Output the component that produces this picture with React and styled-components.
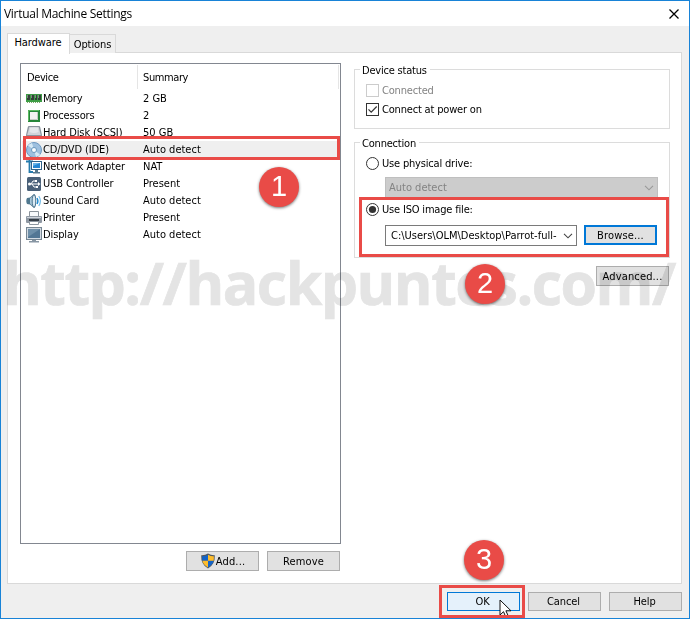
import React from "react";
import styled, { createGlobalStyle, css } from "styled-components";

const Global = createGlobalStyle`
  * { box-sizing: border-box; }
  body { margin: 0; background: #fff; }
`;

const RED = "#e94b47";

const Window = styled.div`
  position: relative;
  width: 690px;
  height: 619px;
  border: 1px solid #1883d7;
  background: #efefef;
  color: #000;
  font: 11px/17px "DejaVu Sans Condensed", "DejaVu Sans", sans-serif;
  font-stretch: condensed;
  white-space: nowrap;
  overflow: hidden;
  display: flex;
  flex-direction: column;
  isolation: isolate;
`;
const TitleBar = styled.header`
  height: 25px;
  flex: none;
  background: #fff;
  display: flex;
  align-items: center;
  justify-content: space-between;
  padding: 0 9px 0 3px;
  font: 12px/24px "Open Sans", "Noto Sans", sans-serif;
  letter-spacing: -0.29px;
`;
const Tabs = styled.nav`
  height: 27px;
  flex: none;
  display: flex;
  align-items: flex-end;
  padding-left: 6px;
`;
const Tab = styled.div`
  border: 1px solid #d9d9d9;
  border-bottom: 0;
  text-align: center;
  height: ${(p) => (p.$active ? 21 : 19)}px;
  width: ${(p) => (p.$active ? 63 : 47)}px;
  line-height: ${(p) => (p.$active ? 18 : 19)}px;
  padding-right: ${(p) => (p.$active ? 1 : 0)}px;
  letter-spacing: -0.1px;
  background: ${(p) => (p.$active ? "#fff" : "#efefef")};
  margin-bottom: ${(p) => (p.$active ? -1 : 0)}px;
  margin-left: ${(p) => (p.$active ? 0 : -1)}px;
  z-index: ${(p) => (p.$active ? 1 : 0)};
`;
const Panel = styled.main`
  width: 675px;
  height: 532px;
  flex: none;
  margin: -1px 0 0 6px;
  border: 1px solid #d9d9d9;
  background: #fff;
  display: flex;
  padding: 11px 10px 0 12px;
  gap: 13px;
`;
const Left = styled.section`
  width: 321px;
`;
const List = styled.div`
  height: 481px;
  margin-top: -1px;
  border: 1px solid #828790;
  padding: 1px;
`;
const ListHead = styled.div`
  display: flex;
  height: 24px;
  margin-bottom: 1px;
  line-height: 25px;
  letter-spacing: -0.4px;
`;
const HeadCell = styled.div`
  width: ${(p) => p.$w}px;
  padding-left: 5px;
  border-right: 1px solid #e5e5e5;
`;
const Row = styled.div`
  display: flex;
  align-items: center;
  height: 17px;
  padding-left: 4px;
  background: ${(p) => (p.$selected ? "#efefef" : "transparent")};
`;
const DeviceName = styled.span`
  width: 101px;
  padding-left: 1px;
  letter-spacing: -0.12px;
`;
const Icon = styled.svg`
  width: 16px;
  height: 16px;
  flex: none;
`;
const ButtonBar = styled.div`
  display: flex;
  justify-content: flex-end;
  gap: 8px;
  margin: 7px 1px 0 0;
`;
const Button = styled.button`
  width: 73px;
  height: 20px;
  padding: 0;
  font: inherit;
  color: inherit;
  letter-spacing: 0.15px;
  display: flex;
  align-items: center;
  justify-content: center;
  border: 1px solid #adadad;
  background: #e1e1e1;
  ${(p) => p.$focus && css`border: 2px solid #0078d7;`}
  ${(p) => p.$hot && css`border-color: #0078d7; background: #e5f1fb;`}
`;
const Right = styled.section`
  width: 316px;
  padding-top: 5px;
  display: flex;
  flex-direction: column;
`;
const Group = styled.fieldset`
  margin: 0 0 ${(p) => p.$gap}px;
  height: ${(p) => p.$h}px;
  border: 1px solid #dcdcdc;
  padding: 0 11px;
`;
const GroupTitle = styled.div`
  width: max-content;
  height: 14px;
  line-height: 16px;
  margin: -7px 0 0 -6px;
  padding: 0 3px 0 2px;
  background: #fff;
  letter-spacing: -0.2px;
`;
const Option = styled.label`
  display: flex;
  align-items: center;
  gap: 3px;
  height: 19px;
  margin-top: ${(p) => p.$top || 0}px;
  color: ${(p) => (p.$disabled ? "#838383" : "#000")};
  letter-spacing: -0.18px;
`;
const Mark = styled.svg`
  width: 13px;
  height: 13px;
  flex: none;
`;
const Combo = styled.div`
  display: flex;
  align-items: center;
  justify-content: space-between;
  width: ${(p) => p.$w}px;
  height: 21px;
  margin-left: ${(p) => p.$indent || 0}px;
  margin-top: ${(p) => p.$top || 0}px;
  padding: 0 3px 0 ${(p) => (p.$disabled ? 3 : 5)}px;
  border: 1px solid ${(p) => (p.$disabled ? "#bfbfbf" : "#7a7a7a")};
  background: ${(p) => (p.$disabled ? "#ccc" : "#fff")};
  color: ${(p) => (p.$disabled ? "#838383" : "#000")};
`;
const FileRow = styled.div`
  display: flex;
  gap: 7px;
  margin: 6px 0 0 19px;
`;
const AlignEnd = styled.div`
  display: flex;
  justify-content: flex-end;
  padding-right: 1px;
`;
const Footer = styled.footer`
  display: flex;
  justify-content: flex-end;
  gap: 8px;
  padding: 8px 7px 0 0;

  ${Button} {
    height: 19px;
    letter-spacing: -0.1px;
    padding-right: 2px;
  }
`;
const Frame = styled.div`
  position: absolute;
  left: ${(p) => p.$x - 1}px;
  top: ${(p) => p.$y - 1}px;
  width: ${(p) => p.$w}px;
  height: ${(p) => p.$h}px;
  border: 3px solid ${RED};
`;
const Step = styled.div`
  position: absolute;
  left: ${(p) => p.$x - 21}px;
  top: ${(p) => p.$y - 21}px;
  width: 40px;
  height: 40px;
  border-radius: 50%;
  background: ${RED};
  color: #fff;
  text-align: center;
  font: 29px/39px "Liberation Sans", Arial, sans-serif;
  box-shadow: 0 1px 3px rgba(0, 0, 0, 0.55);
`;
const Watermark = styled.div`
  position: absolute;
  left: 2px;
  top: 241px;
  font: 800 59px/80px "Open Sans", "Noto Sans", sans-serif;
  font-weight: 700;
  letter-spacing: -1.5px;
  color: #e4e4e4;
  -webkit-text-stroke: 0.7px #e4e4e4;
  mix-blend-mode: multiply;
  pointer-events: none;
`;
const Pointer = styled.svg`
  position: absolute;
  left: 498px;
  top: 598px;
  width: 13px;
  height: 20px;
`;

const icons = {
  memory: (
    <>
      <path d="M0 3h16v8H0z" fill="#3d9c45" />
      <path d="M1 4h3v5H1zM5 4h3v5H5zM9 4h2v5H9zM12 4h3v5h-3z" fill="#344039" />
      <path d="M1 4h1v3H1zM5 4h1v3H5zM9 4h1v3H9zM12 4h1v3h-1z" fill="#7d8b80" />
      <path d="M1 11.500h14" stroke="#78a86a" strokeDasharray="1 1" />
    </>
  ),
  cpu: (
    <>
      <rect x="2" y="2" width="12" height="12" fill="#26863a" />
      <path d="M2.500 13V2.500H13" fill="none" stroke="#5dbb63" />
      <rect x="4" y="4" width="8" height="8" fill="#f1f2f0" />
      <path d="M4 11.500h7.500V4" fill="none" stroke="#c4ccc4" />
    </>
  ),
  disk: (
    <>
      <path d="M3 1h10q1 0 1.200 1L16 10v4H0v-4L1.800 2Q2 1 3 1z" fill="#8c959f" />
      <path d="M3.300 2h9.400L14.800 10H1.200z" fill="#d0d4da" />
      <path d="M4 3q4-1 8 0l.6 4q-4.600 2-9.200 0z" fill="#e4e7eb" />
      <path d="M1 11h14v2H1z" fill="#555d66" />
      <path d="M12 11.500h2" stroke="#75dc62" />
    </>
  ),
  disc: (
    <>
      <circle cx="8" cy="8" r="7.500" fill="#9dc0df" stroke="#6d98c0" />
      <path d="M8 8L2 3.500A7 7 0 0 1 6 1zM8 8l6 4.500a7 7 0 0 1-4 2.500z" fill="#d5e9f5" />
      <circle cx="8" cy="8" r="2.600" fill="#e7f2f9" stroke="#719dc1" />
      <circle cx="8" cy="8" r="1" fill="#fff" />
    </>
  ),
  network: (
    <>
      <path d="M0 2.500h7M3.500 1v12H7" fill="none" stroke="#257bad" strokeWidth="1.800" />
      <rect x="5.500" y="2.500" width="10" height="8" fill="#fff" stroke="#31648b" />
      <path d="M7 4h7v5H7z" fill="#2686d2" />
      <path d="M7 4h7L7 7z" fill="#6ab5e9" />
      <path d="M9 11h3v2h2v1.500H7V13h2z" fill="#53788f" />
    </>
  ),
  usb: (
    <>
      <rect x="1" y="1" width="14" height="14" rx="1.500" fill="#496078" />
      <path d="M3 8h9M5 8l2-3h2M6 8l2 3h2" fill="none" stroke="#fff" />
      <path d="M12 6l2.500 2-2.500 2zM9 4h2v2H9zM10 10h2v2h-2z" fill="#fff" />
      <circle cx="3.500" cy="8" r="1.500" fill="#fff" />
    </>
  ),
  sound: (
    <>
      <path d="M1 5l3-.5L8 1q2 0 2 7t-2 7l-4-3.500L1 11Q-.5 8 1 5z" fill="#50788f" />
      <path d="M4 5.500l3.500-3v11l-3.500-3z" fill="#a9c7d9" />
      <ellipse cx="8" cy="8" rx="1.800" ry="6.200" fill="#dbeaf3" stroke="#315d7a" strokeWidth=".8" />
      <path d="M11 5q1.800 3 0 6" fill="none" stroke="#1d8ad1" strokeWidth="1.400" />
      <path d="M12.800 3q3.200 5 0 10" fill="none" stroke="#71bce8" strokeWidth="1.200" />
    </>
  ),
  printer: (
    <>
      <path d="M3.500 1.500h9v6h-9z" fill="#f8fafc" stroke="#8b939b" />
      <rect x="0" y="6" width="16" height="7" rx="1" fill="#8f98a3" />
      <path d="M1 7.500h14" stroke="#d0d5dc" />
      <path d="M3 9h10v2H3z" fill="#353d46" />
      <path d="M3.500 11.500h9v3h-9z" fill="#fff" stroke="#8c96a0" />
    </>
  ),
  display: (
    <>
      <rect x=".5" y=".5" width="15" height="12" fill="#d2dae2" stroke="#778693" />
      <path d="M2 2h12v9H2z" fill="#527694" />
      <path d="M2 2h12L2 10z" fill="#6e8fa9" />
      <path d="M6 13h4v1h3v1.500H3V14h3z" fill="#8896a3" />
    </>
  ),
};

const devices = [
  ["memory", "Memory", "2 GB"],
  ["cpu", "Processors", "2"],
  ["disk", "Hard Disk (SCSI)", "50 GB"],
  ["disc", "CD/DVD (IDE)", "Auto detect"],
  ["network", "Network Adapter", "NAT"],
  ["usb", "USB Controller", "Present"],
  ["sound", "Sound Card", "Auto detect"],
  ["printer", "Printer", "Present"],
  ["display", "Display", "Auto detect"],
];

const Chevron = ({ color = "#444" }) => (
  <svg width="10" height="6" viewBox="0 0 10 6">
    <path d="M1 .8l4 4 4-4" fill="none" stroke={color} strokeWidth="1.1" />
  </svg>
);
const Check = ({ checked }) => (
  <Mark viewBox="0 0 13 13">
    <rect x=".5" y=".5" width="12" height="12" fill="#fff" stroke={checked ? "#333" : "#ccc"} />
    {checked && <path d="M2.500 6.300l2.700 2.800 5.500-5.600" fill="none" stroke="#333" strokeWidth="1.200" />}
  </Mark>
);
const Radio = ({ checked }) => (
  <Mark viewBox="0 0 13 13">
    <circle cx="6.500" cy="6.500" r="6" fill="#fff" stroke="#333" />
    {checked && <circle cx="6.500" cy="6.500" r="3.600" fill="#333" />}
  </Mark>
);
const Shield = () => (
  <Icon viewBox="0 0 16 16">
    <path d="M8 .5q3 2 6.800 1.800Q15.300 11.500 8 15.500Q.7 11.500 1.200 2.300Q5 2.500 8 .5z" fill="#505961" />
    <path d="M8 1.800v6H2.300Q2 5.500 2.200 3.300Q5.500 3.300 8 1.800zM8 7.800h5.700Q12.600 12 8 14.400z" fill="#1464c8" />
    <path d="M8 1.800v6h5.700Q14 5.500 13.800 3.300Q10.500 3.300 8 1.800zM8 7.800H2.300Q3.400 12 8 14.400z" fill="#fdbc2c" />
  </Icon>
);

export default function App() {
  return (
    <Window>
      <Global />
      <TitleBar>
        <span>Virtual Machine Settings</span>
        <svg width="12" height="12" viewBox="0 0 12 12">
          <path d="M1.500 1.500l9 9M10.500 1.500l-9 9" stroke="#000" strokeWidth="1.300" />
        </svg>
      </TitleBar>
      <Tabs>
        <Tab $active>Hardware</Tab>
        <Tab>Options</Tab>
      </Tabs>
      <Panel>
        <Left>
          <List>
            <ListHead>
              <HeadCell $w={116}>Device</HeadCell>
              <HeadCell $w={201}>Summary</HeadCell>
            </ListHead>
            {devices.map(([icon, name, summary]) => (
              <Row key={name} $selected={icon === "disc"}>
                <Icon viewBox="0 0 16 16">{icons[icon]}</Icon>
                <DeviceName>{name}</DeviceName>
                <span>{summary}</span>
              </Row>
            ))}
          </List>
          <ButtonBar>
            <Button><Shield />Add...</Button>
            <Button>Remove</Button>
          </ButtonBar>
        </Left>
        <Right>
          <Group $h={60} $gap={13}>
            <GroupTitle>Device status</GroupTitle>
            <Option $top={4} $disabled><Check />Connected</Option>
            <Option><Check checked />Connect at power on</Option>
          </Group>
          <Group $h={116} $gap={8}>
            <GroupTitle>Connection</GroupTitle>
            <Option $top={4}><Radio />Use physical drive:</Option>
            <Combo $w={273} $indent={19} $top={4} $disabled>
              <span>Auto detect</span>
              <Chevron color="#999" />
            </Combo>
            <Option $top={2}><Radio checked />Use ISO image file:</Option>
            <FileRow>
              <Combo $w={192}>
                <span>C:\Users\OLM\Desktop\Parrot-full-</span>
                <Chevron />
              </Combo>
              <Button $focus>Browse...</Button>
            </FileRow>
          </Group>
          <AlignEnd><Button>Advanced...</Button></AlignEnd>
        </Right>
      </Panel>
      <Footer>
        <Button $hot>OK</Button>
        <Button>Cancel</Button>
        <Button>Help</Button>
      </Footer>
      <Watermark>http://hackpuntes.com/</Watermark>
      <Pointer viewBox="0 0 13 20">
        <path d="M1 1v15l3.500-3.300L7 18.500l2.500-1-2.600-5.700H12z" fill="#fff" stroke="#111" />
      </Pointer>
      <Frame $x={23} $y={136} $w={317} $h={24} />
      <Frame $x={359} $y={197} $w={310} $h={60} />
      <Frame $x={439} $y={585} $w={86} $h={33} />
      <Step $x={279} $y={187}>1</Step>
      <Step $x={485} $y={284}>2</Step>
      <Step $x={484} $y={560}>3</Step>
    </Window>
  );
}
